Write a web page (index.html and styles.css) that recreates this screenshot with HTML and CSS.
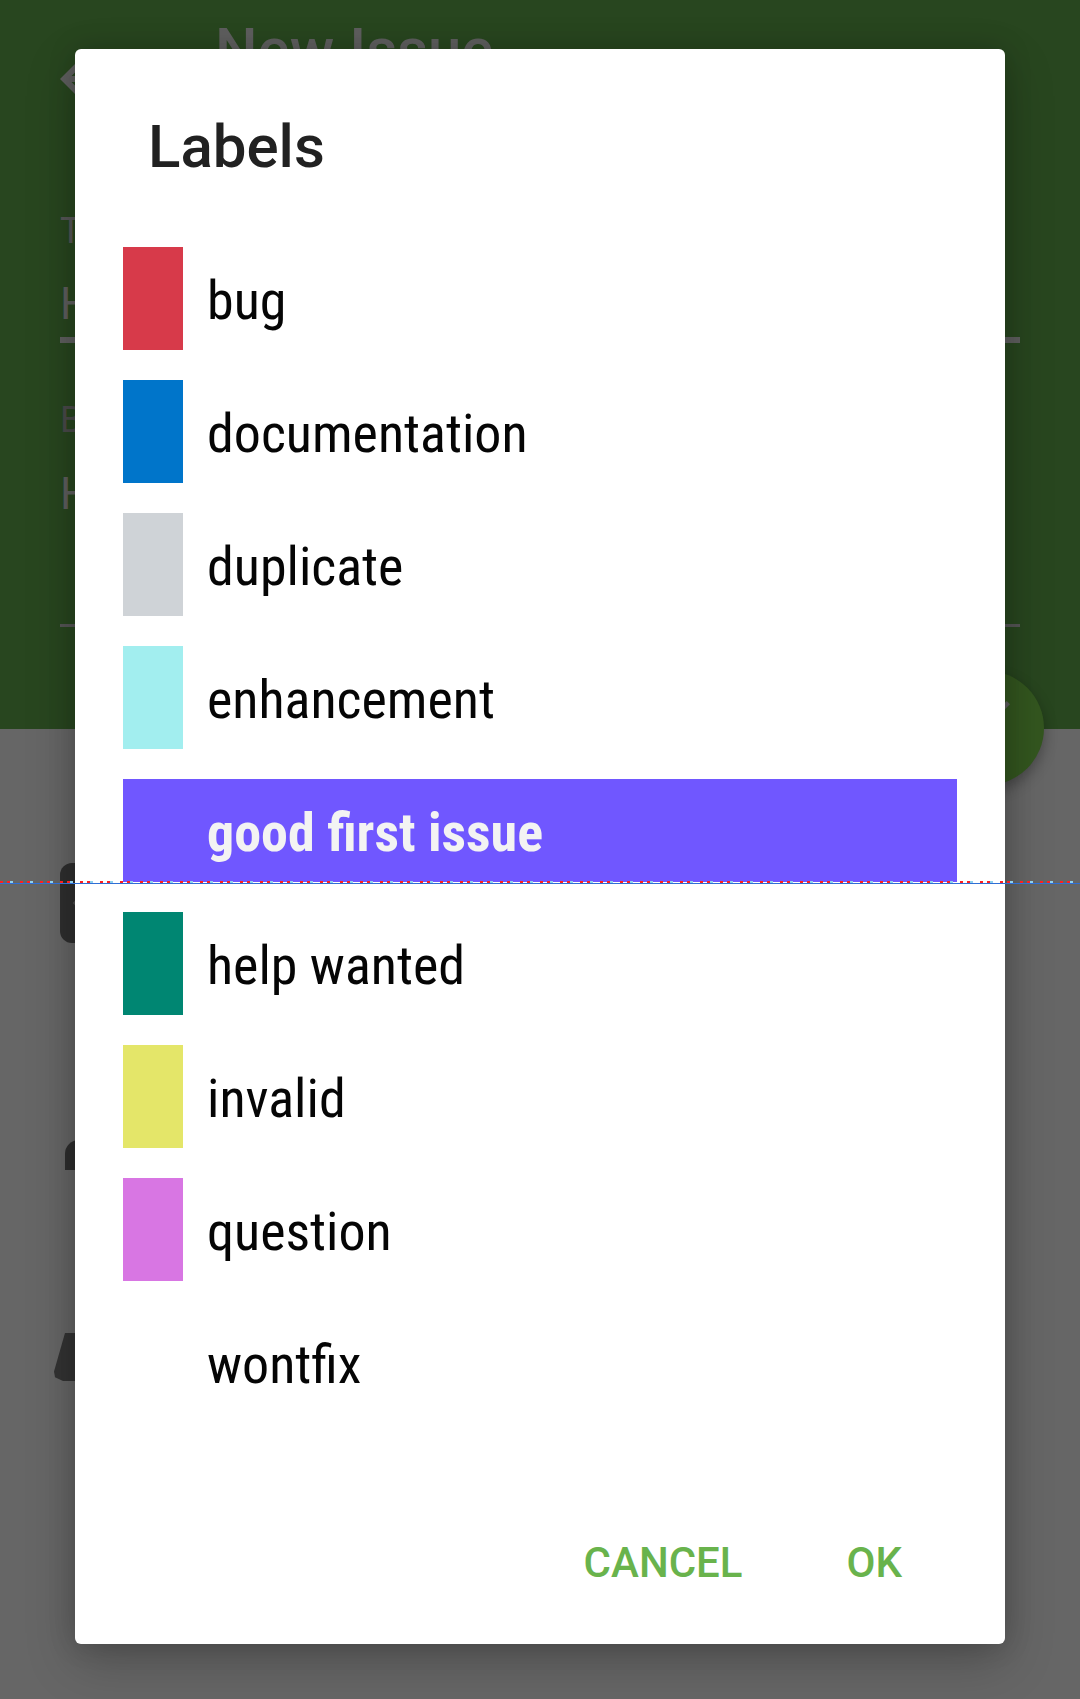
FILE: index.html
```html
<!DOCTYPE html>
<html lang="en">
<head>
<meta charset="utf-8">
<title>New Issue – Labels</title>
<link rel="stylesheet" href="styles.css">
</head>
<body>
<div class="screen">
  <header class="appbar">
    <div class="toolbar">
      <svg class="back" viewBox="0 0 24 24" aria-hidden="true"><path d="M20 11H7.83l5.59-5.59L12 4l-8 8 8 8 1.41-1.41L7.83 13H20v-2z"/></svg>
      <h1 class="toolbar-title">New Issue</h1>
    </div>
    <div class="field field-title">
      <div class="field-label">Title</div>
      <div class="field-value">Hello</div>
    </div>
    <div class="field field-body">
      <div class="field-label">Body</div>
      <div class="field-value">Hello world</div>
    </div>
    <div class="fab">
      <svg class="fab-icon" viewBox="0 0 24 24" aria-hidden="true"><path d="M9 16.17L4.83 12l-1.42 1.41L9 19 21 7l-1.41-1.41z"/></svg>
    </div>
  </header>
  <main class="content">
    <div class="thumb">
      <svg class="thumb-chevron" viewBox="0 0 24 24" aria-hidden="true"><path d="M15.41 7.41L14 6l-6 6 6 6 1.41-1.41L10.83 12z"/></svg>
    </div>
    <div class="icon-round"></div>
    <div class="icon-tag"></div>
  </main>
</div>

<div class="dialog-layer">
  <section class="dialog" role="dialog" aria-labelledby="dlg-title">
    <h2 class="dialog-title" id="dlg-title">Labels</h2>
    <ul class="label-list">
      <li class="label-item"><span class="swatch" style="background:#d73a4a"></span><span class="label-name">bug</span></li>
      <li class="label-item"><span class="swatch" style="background:#0075ca"></span><span class="label-name">documentation</span></li>
      <li class="label-item"><span class="swatch" style="background:#cfd3d7"></span><span class="label-name">duplicate</span></li>
      <li class="label-item"><span class="swatch" style="background:#a2eeef"></span><span class="label-name">enhancement</span></li>
      <li class="label-item is-selected" style="background:#7057ff"><span class="swatch"></span><span class="label-name">good first issue</span></li>
      <li class="label-item"><span class="swatch" style="background:#008672"></span><span class="label-name">help wanted</span></li>
      <li class="label-item"><span class="swatch" style="background:#e4e669"></span><span class="label-name">invalid</span></li>
      <li class="label-item"><span class="swatch" style="background:#d876e3"></span><span class="label-name">question</span></li>
      <li class="label-item"><span class="swatch" style="background:#ffffff"></span><span class="label-name">wontfix</span></li>
    </ul>
    <div class="dialog-actions">
      <button class="action" type="button">CANCEL</button>
      <button class="action" type="button">OK</button>
    </div>
  </section>
</div>

<div class="guide-line" aria-hidden="true"></div>
</body>
</html>
```
FILE: styles.css
```css
* {
  box-sizing: border-box;
  margin: 0;
  padding: 0;
}

html,
body {
  width: 1080px;
  height: 1699px;
  overflow: hidden;
}

body {
  position: relative;
  background: #666666;
  font-family: Roboto, "Noto Sans", "Liberation Sans", sans-serif;
}

/* ---------- underlying screen (dimmed) ---------- */
.screen {
  width: 1080px;
  height: 1699px;
  display: flex;
  flex-direction: column;
}

.appbar {
  position: relative;
  flex: none;
  height: 729px;
  background: #28461f;
}

.toolbar {
  display: flex;
  align-items: flex-start;
  height: 150px;
  padding-left: 48px;
}

.back {
  flex: none;
  width: 72px;
  height: 72px;
  margin-top: 43px;
  fill: #5f5f5f;
}

.toolbar-title {
  margin-top: 14px;
  margin-left: 95px;
  font-size: 60px;
  line-height: 72px;
  font-weight: 500;
  color: #5f5f5f;
}

.field {
  margin: 0 60px;
}

.field-label {
  font-size: 36px;
  line-height: 42px;
  color: #575757;
}

.field-value {
  font-size: 44px;
  line-height: 52px;
  color: #5f5f5f;
}

.field-title .field-label {
  margin-top: 60px;
}

.field-title .field-value {
  margin-top: 26px;
  padding-bottom: 7px;
  border-bottom: 6px solid #5f5f5f;
}

.field-body .field-label {
  margin-top: 56px;
  color: #4a4a4a;
}

.field-body .field-value {
  margin-top: 27px;
  padding-bottom: 104px;
  border-bottom: 3px solid #555555;
}

.fab {
  position: absolute;
  left: 930px;
  top: 671px;
  width: 114px;
  height: 114px;
  border-radius: 50%;
  background: #33561f;
  box-shadow: 0 6px 14px rgba(0, 0, 0, 0.3);
  display: flex;
  align-items: center;
  justify-content: center;
}

.fab-icon {
  width: 56px;
  height: 56px;
  margin-left: 4px;
  margin-bottom: 24px;
  fill: #5f5f5f;
}

.content {
  flex: 1;
  padding: 134px 0 0 60px;
  background: #666666;
}

.thumb {
  width: 84px;
  height: 80px;
  border-radius: 12px;
  background: #2f2f2f;
  display: flex;
  align-items: center;
  padding-left: 4px;
}

.thumb-chevron {
  width: 26px;
  height: 26px;
  fill: #4f4f4f;
}

.icon-round {
  width: 40px;
  height: 30px;
  margin-top: 197px;
  margin-left: 5px;
  border-radius: 14px 0 0 0;
  background: #2e2e2e;
}

.icon-tag {
  width: 30px;
  height: 48px;
  margin-top: 163px;
  margin-left: -6px;
  background: #333333;
  clip-path: polygon(11px 0, 100% 0, 100% 100%, 9px 100%, 1px 92%, 0 80%);
}

/* ---------- dialog ---------- */
.dialog-layer {
  position: absolute;
  inset: 0;
  display: flex;
  justify-content: center;
  align-items: flex-start;
  padding-top: 49px;
}

.dialog {
  width: 930px;
  height: 1595px;
  display: flex;
  flex-direction: column;
  background: #ffffff;
  border-radius: 6px;
  box-shadow: 0 18px 50px rgba(0, 0, 0, 0.22), 0 0 28px rgba(0, 0, 0, 0.16);
}

.dialog-title {
  margin-top: 62px;
  padding-left: 73px;
  font-size: 60px;
  line-height: 72px;
  font-weight: 500;
  color: #212121;
}

.label-list {
  list-style: none;
  margin: 64px 48px 0;
  display: flex;
  flex-direction: column;
  gap: 30px;
}

.label-item {
  display: flex;
  align-items: flex-start;
  gap: 24px;
  height: 103px;
}

.swatch {
  flex: none;
  width: 60px;
  height: 103px;
}

.label-name {
  margin-top: 22px;
  font-family: "Roboto Condensed", "Liberation Sans Narrow", "Arial Narrow", Roboto, sans-serif;
  font-stretch: condensed;
  font-size: 54px;
  line-height: 64px;
  color: #050505;
  white-space: nowrap;
}

.is-selected .label-name {
  font-weight: 700;
  color: #f3f3f3;
}

.dialog-actions {
  display: flex;
  justify-content: flex-end;
  gap: 104px;
  margin-top: auto;
  padding: 0 103px 57px 0;
}

.action {
  border: 0;
  background: none;
  font-family: Roboto, "Noto Sans", sans-serif;
  font-size: 42px;
  line-height: 48px;
  font-weight: 500;
  color: #69b34c;
}

/* ---------- layout-bounds guide line over everything ---------- */
.guide-line {
  position: absolute;
  left: 0;
  top: 881px;
  width: 1080px;
  height: 3px;
  z-index: 10;
  background:
    repeating-linear-gradient(90deg, #ff1f1f 0 3px, transparent 3px 7px, #ff1f1f 7px 10px, #8fd0ee 10px 13px, transparent 13px 20px) 0 0 / 100% 2px no-repeat,
    linear-gradient(#2f6fd6, #2f6fd6) 0 2px / 100% 1px no-repeat;
}
```
